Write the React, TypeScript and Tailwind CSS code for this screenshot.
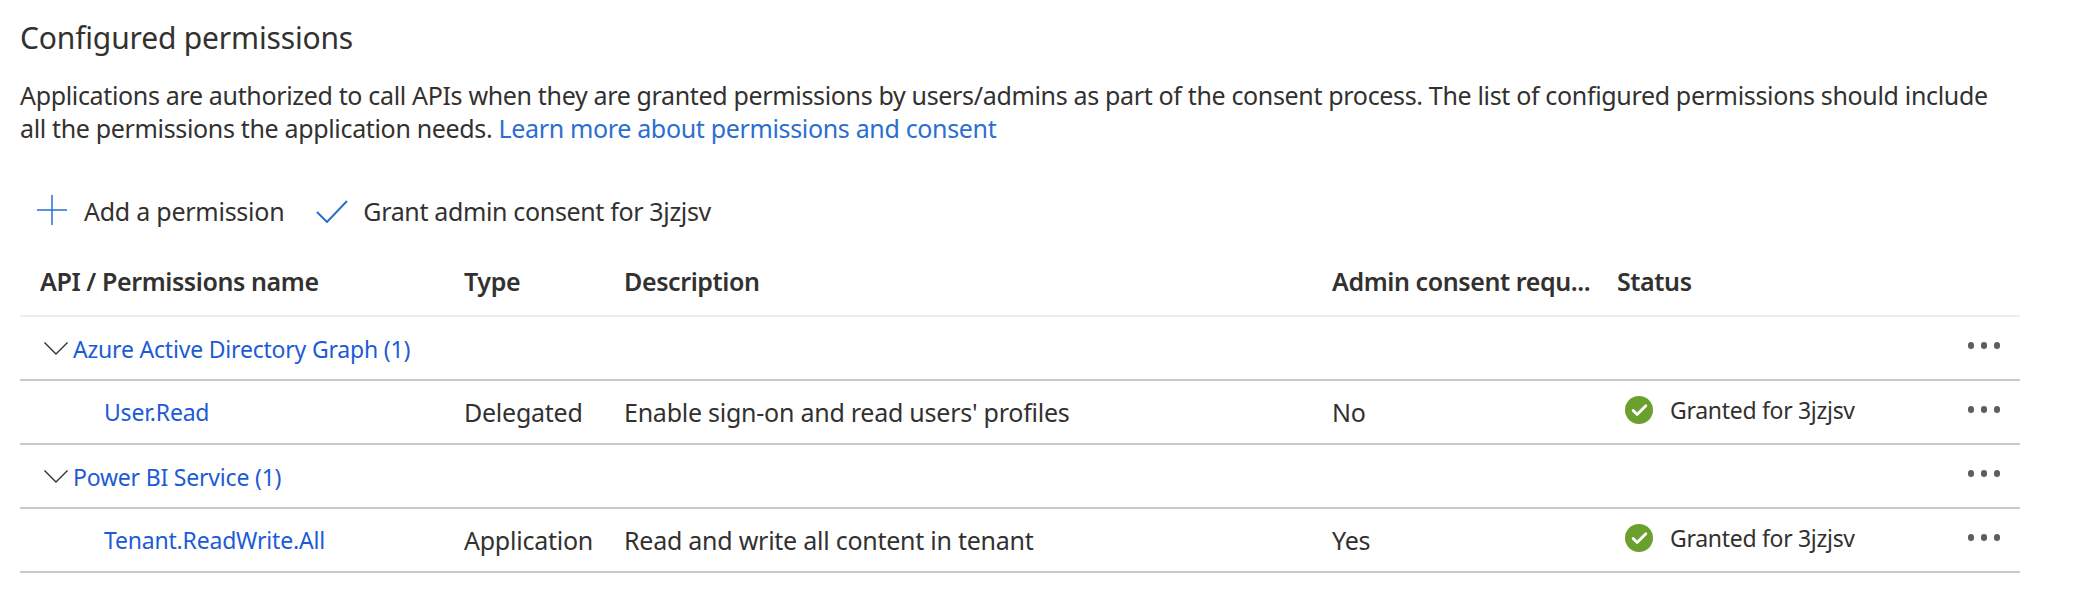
import { Check } from "lucide-react";

const rowCols = "grid grid-cols-[444px_160px_708px_285px_1fr_80px]";

function Chevron() {
    return (
        <svg width="24" height="13" viewBox="0 0 24 13" fill="none" stroke="#323130" strokeWidth="1.4" className="shrink-0">
            <path d="M0.5 0.5 L12 12 L23.5 0.5" />
        </svg>
    );
}

function MoreDots() {
    return (
        <div className="flex gap-[7px] justify-end pr-5 -mt-[6px]">
            <span className="w-[6px] h-[7px] rounded-full bg-[#605e5c]" />
            <span className="w-[6px] h-[7px] rounded-full bg-[#605e5c]" />
            <span className="w-[6px] h-[7px] rounded-full bg-[#605e5c]" />
        </div>
    );
}

function GroupRow({ name }: { name: string }) {
    return (
        <div className="h-[64px] border-b-2 border-[#c8c8c8] flex items-center justify-between">
            <div className="flex items-center pl-[24px] gap-[5px]">
                <Chevron />
                <span className="text-[#1d5bd6] text-[23px] tracking-[-0.2px] mt-[2px]">{name}</span>
            </div>
            <MoreDots />
        </div>
    );
}

function PermissionRow({ name, type, description, admin }: { name: string; type: string; description: string; admin: string }) {
    return (
        <div className={`${rowCols} h-[64px] border-b-2 border-[#c8c8c8] items-center`}>
            <span className="pl-[84px] text-[#1d5bd6] text-[23px] tracking-[-0.2px]">{name}</span>
            <span>{type}</span>
            <span>{description}</span>
            <span>{admin}</span>
            <div className="flex items-center gap-[17px] pl-[8px] -mt-[4px] text-[23px] tracking-[-0.3px]">
                <span className="w-[28px] h-[28px] rounded-full bg-[#6ba02f] flex items-center justify-center">
                    <Check size={19} color="white" strokeWidth={3.5} />
                </span>
                <span>Granted for 3jzjsv</span>
            </div>
            <MoreDots />
        </div>
    );
}

export default function App() {
    return (
        <div className="w-[2084px] h-[616px] bg-white overflow-hidden text-[#323130] text-[25px] leading-[33px] font-['Noto_Sans',sans-serif] tracking-[-0.25px]">
            <h1 className="text-[30px] leading-[40px] pt-[18px] pl-5 font-normal tracking-[-0.17px]">Configured permissions</h1>
            <p className="mt-[21px] px-5 w-[2025px] tracking-[-0.34px]">
                Applications are authorized to call APIs when they are granted permissions by users/admins as part of the consent process. The list of configured permissions should include all the permissions the application needs.{" "}
                <a className="text-[#2a6fd0]">Learn more about permissions and consent</a>
            </p>
            <div className="flex items-center mt-[42px] pl-[37px] h-[48px]">
                <svg width="30" height="30" viewBox="0 0 30 30" stroke="#2a6fd0" strokeWidth="1.5" fill="none" className="-mt-[2px]">
                    <path d="M15 0 V30 M0 15 H30" />
                </svg>
                <span className="ml-[17px]">Add a permission</span>
                <svg width="32" height="23" viewBox="0 0 32 23" stroke="#2a6fd0" strokeWidth="2" fill="none" className="ml-[32px]">
                    <path d="M1 12 L11 22 L31 1" />
                </svg>
                <span className="ml-[15px] tracking-[-0.35px]">Grant admin consent for 3jzjsv</span>
            </div>
            <div className="ml-5 w-[2000px] mt-[18px]">
                <div className={`${rowCols} h-[64px] items-center border-b-2 border-[#ededed] font-semibold pb-[5px] tracking-[-0.4px]`}>
                    <span className="pl-5">API / Permissions name</span>
                    <span>Type</span>
                    <span>Description</span>
                    <span className="whitespace-nowrap">Admin consent requ...</span>
                    <span>Status</span>
                </div>
                <GroupRow name="Azure Active Directory Graph (1)" />
                <PermissionRow name="User.Read" type="Delegated" description="Enable sign-on and read users' profiles" admin="No" />
                <GroupRow name="Power BI Service (1)" />
                <PermissionRow name="Tenant.ReadWrite.All" type="Application" description="Read and write all content in tenant" admin="Yes" />
            </div>
        </div>
    );
}
